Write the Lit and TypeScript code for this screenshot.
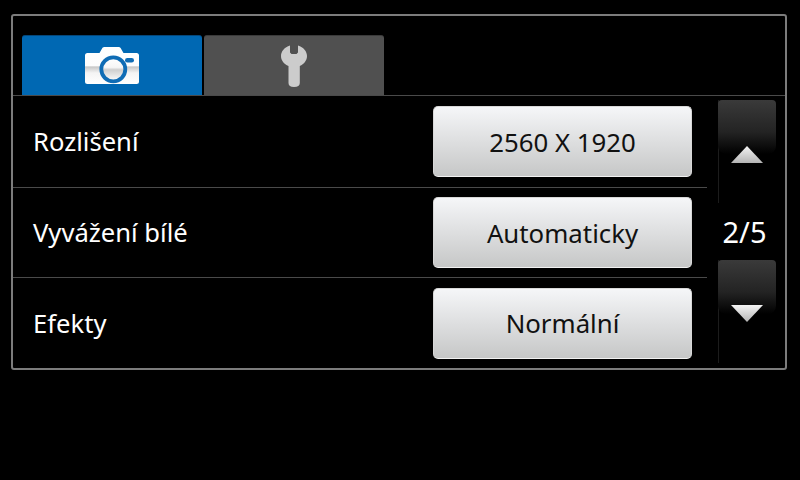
import { LitElement, html, css, svg } from "lit";
import { customElement } from "lit/decorators.js";

const camera = html`<svg class="cam" width="56" height="40" viewBox="0 0 56 40">
  <defs>
    <linearGradient id="cb" x1="0" y1="0" x2="0" y2="1">
      <stop offset="0" stop-color="#ffffff"/><stop offset="0.5" stop-color="#fdfdfd"/>
      <stop offset="0.54" stop-color="#c8c8c8"/><stop offset="0.7" stop-color="#f4f4f4"/><stop offset="1" stop-color="#ffffff"/>
    </linearGradient>
    <linearGradient id="cl" x1="0" y1="0" x2="0" y2="1">
      <stop offset="0" stop-color="#ffffff"/><stop offset="0.42" stop-color="#f6f6f6"/>
      <stop offset="0.52" stop-color="#cfcfcf"/><stop offset="1" stop-color="#ffffff"/>
    </linearGradient>
  </defs>
  <path fill="url(#cb)" d="M3.5 7H15.5L18.5 1.800Q19.200 1 20.500 1H34.500Q36 1 36.600 2L39.500 7H52.500Q55 7 55 9.500V35.500Q55 38 52.500 38H3.500Q1 38 1 35.500V9.500Q1 7 3.500 7Z"/>
  <circle cx="29.300" cy="23.300" r="12" fill="url(#cl)" stroke="#0f6cb5" stroke-width="3.800"/>
  <rect x="41" y="12" width="9" height="4.600" rx="2.300" fill="#0f6cb5"/>
</svg>`;

const wrench = html`<svg class="wr" width="28" height="44" viewBox="0 0 28 44">
  <path fill="#cccccc" d="M10 1.500V8.500L11.500 10H16.500L18 8.500V1.500C23.500 3 27 7.500 27 12C27 16.500 24 20 19.800 22V39Q19.800 43 14 43Q8.500 43 8.500 39V22C4 20 1 16.500 1 12C1 7.500 4.500 3 10 1.500Z"/>
</svg>`;

const triangle = (up: boolean) => svg`<svg class="tri" width="32" height="17" viewBox="0 0 32 17">
  <defs><linearGradient id=${up ? "tu" : "td"} x1="0" y1="0" x2="0" y2="1">
    <stop offset="0" stop-color="#f4f4f4"/><stop offset="1" stop-color="#b4b4b4"/>
  </linearGradient></defs>
  <polygon fill=${`url(#${up ? "tu" : "td"})`} points=${up ? "16,0 32,17 0,17" : "0,0 32,0 16,17"}/>
</svg>`;

const rows = [
  ["Rozlišení", "2560 X 1920"],
  ["Vyvážení bílé", "Automaticky"],
  ["Efekty", "Normální"],
];

@customElement("app-root")
export class AppRoot extends LitElement {
  static styles = css`
    :host {
      display: block;
      width: 800px;
      height: 480px;
      background: #000;
      color: #fff;
      font-family: "Noto Sans", "Open Sans", sans-serif;
      overflow: hidden;
      padding: 14px 13px 0 11px;
      box-sizing: border-box;
    }
    .frame {
      height: 356px;
      box-sizing: border-box;
      border: 2px solid #7c7c7c;
      border-radius: 3px;
      display: flex;
      flex-direction: column;
    }
    .tabs {
      display: flex;
      gap: 2px;
      padding: 19px 0 0 9px;
      height: 80px;
      box-sizing: border-box;
      border-bottom: 1px solid #4a4a4a;
    }
    .tab {
      width: 180px;
      height: 60px;
      border-radius: 3px 3px 0 0;
      display: flex;
      align-items: center;
      justify-content: center;
      box-sizing: border-box;
    }
    .tab.on { background: #0068b3; border-top: 1px solid #05477a; }
    .tab.off { background: #505050; border-top: 1px solid #3a3a3a; }
    .cam { display: block; }
    .wr { display: block; margin-left: -1px; }
    .main { flex: 1; display: flex; min-height: 0; }
    .list { width: 694px; }
    .row {
      height: 90px;
      box-sizing: border-box;
      display: flex;
      align-items: center;
      justify-content: space-between;
      padding: 0 15px 0 20px;
      border-bottom: 1px solid #4a4a4a;
      font-size: 25.6px;
    }
    .row:first-child { height: 92px; }
    .row:last-child { border-bottom: none; }
    .btn {
      width: 259px;
      height: 71px;
      box-sizing: border-box;
      border-radius: 5px;
      border: 1px solid #d8d8d8;
      border-bottom-color: #f2f2f2;
      background: linear-gradient(#f5f6f8, #c6c7c7);
      color: #111;
      display: flex;
      align-items: center;
      justify-content: center;
      font-size: 25.8px;
    }
    .side {
      width: 58px;
      margin-left: 11px;
      padding-top: 4px;
      display: flex;
      flex-direction: column;
    }
    .arrow {
      position: relative;
      height: 103px;
      border-left: 1px solid #1c1c1c;
      box-sizing: border-box;
      display: flex;
      justify-content: center;
    }
    .fade {
      position: absolute;
      left: -1px;
      right: 0;
      top: 0;
      height: 54px;
      border-radius: 4px 4px 8px 8px;
      background: linear-gradient(#3a3a3a, #232323 60%, #000);
    }
    .tri { position: relative; display: block; margin-left: -1px; }
    .arrow.up .tri { margin-top: 46px; }
    .arrow.down .tri { margin-top: 45px; }
    .count {
      height: 57px;
      display: flex;
      align-items: center;
      justify-content: center;
      font-size: 29px;
      padding-right: 5px;
    }
  `;

  render() {
    return html`<div class="frame">
      <div class="tabs">
        <div class="tab on">${camera}</div>
        <div class="tab off">${wrench}</div>
      </div>
      <div class="main">
        <div class="list">
          ${rows.map(
            ([l, v]) => html`<div class="row"><span>${l}</span><div class="btn">${v}</div></div>`
          )}
        </div>
        <div class="side">
          <div class="arrow up"><div class="fade"></div>${triangle(true)}</div>
          <div class="count">2/5</div>
          <div class="arrow down"><div class="fade"></div>${triangle(false)}</div>
        </div>
      </div>
    </div>`;
  }
}
